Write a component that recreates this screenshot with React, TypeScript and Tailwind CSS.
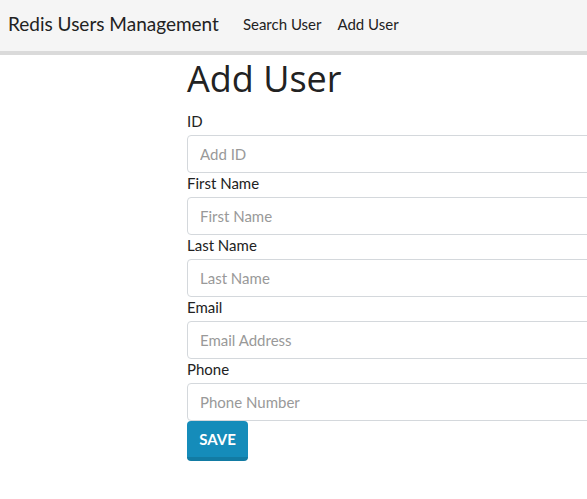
import React from 'react'

const fields = [
  { label: 'ID', placeholder: 'Add ID' },
  { label: 'First Name', placeholder: 'First Name' },
  { label: 'Last Name', placeholder: 'Last Name' },
  { label: 'Email', placeholder: 'Email Address' },
  { label: 'Phone', placeholder: 'Phone Number' },
]

function Field({ label, placeholder }: { label: string; placeholder: string }) {
  return (
    <div>
      <label className="block h-[20px] text-[15px] leading-[20px] text-[#222]">
        {label}
      </label>
      <input
        type="text"
        placeholder={placeholder}
        className="mt-[4px] block h-[38px] w-[600px] rounded-[4px] border border-[#d4d8dc] bg-white px-[12px] text-[15px] text-[#333] placeholder:text-[#999]"
      />
    </div>
  )
}

export default function App() {
  return (
    <div className="min-h-[499px] overflow-hidden bg-white font-['Lato',sans-serif] text-[#222]">
      <nav className="flex h-[55px] items-center border-b-4 border-[#dadada] bg-[#f5f5f5] pb-[3px]">
        <a className="ml-[8px] text-[19px] text-[#222]">Redis Users Management</a>
        <div className="ml-[24px] flex gap-[16px] text-[15px] text-[#222]">
          <a>Search User</a>
          <a>Add User</a>
        </div>
      </nav>

      <div className="pl-[187px]">
        <h1 className="mt-[3px] mb-[11px] whitespace-nowrap font-['Open_Sans',sans-serif] text-[36px] leading-[42px] text-[#222]">
          Add User
        </h1>
        <div className="flex flex-col">
          {fields.map((f) => (
            <Field key={f.label} {...f} />
          ))}
        </div>
        <button className="h-[40px] w-[61px] rounded-[4px] border-b-4 border-[#127ba3] bg-[#158cba] text-[15px] font-bold uppercase text-white">
          Save
        </button>
      </div>
    </div>
  )
}
